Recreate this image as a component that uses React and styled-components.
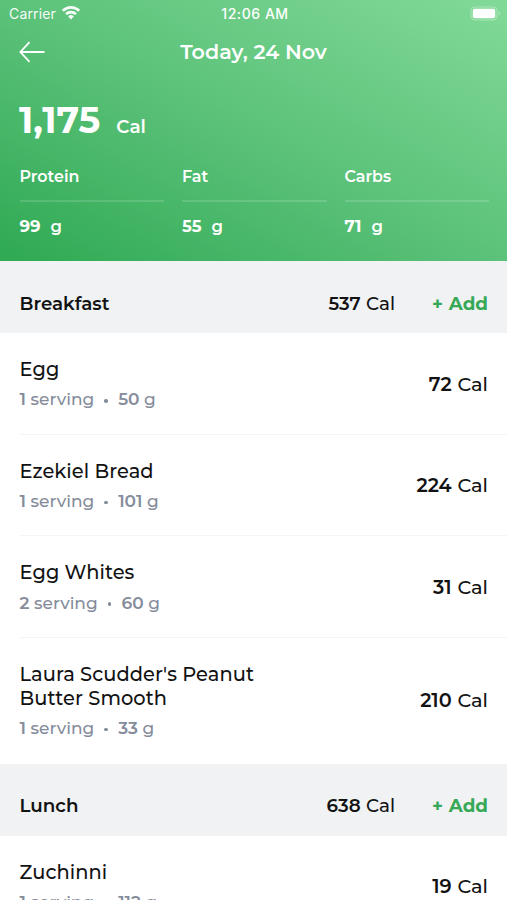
import React from 'react'
import styled, { createGlobalStyle } from 'styled-components'

const nutrients = [
    { label: 'Protein', value: 99 },
    { label: 'Fat', value: 55 },
    { label: 'Carbs', value: 71 },
];

const meals = [
    {
        name: 'Breakfast',
        cal: 537,
        foods: [
            { name: 'Egg', servings: 1, grams: 50, cal: 72 },
            { name: 'Ezekiel Bread', servings: 1, grams: 101, cal: 224 },
            { name: 'Egg Whites', servings: 2, grams: 60, cal: 31 },
            { name: "Laura Scudder's Peanut Butter Smooth", servings: 1, grams: 33, cal: 210 },
        ],
    },
    {
        name: 'Lunch',
        cal: 638,
        foods: [
            { name: 'Zuchinni', servings: 1, grams: 112, cal: 19 },
        ],
    },
];

const WifiIcon = () => (
    <svg width="20" height="15" viewBox="0 0 20 15" fill="none" stroke="#fff" strokeWidth="2.7">
        <path d="M1.8 5.7a11.6 11.6 0 0 1 16.4 0" />
        <path d="M5 9.1a7.1 7.1 0 0 1 10 0" />
        <path d="M10 14.4 7.1 11.5a4.1 4.1 0 0 1 5.8 0z" fill="#fff" stroke="none" />
    </svg>
);

const BatteryIcon = () => (
    <svg width="31" height="15" viewBox="0 0 31 15" fill="none">
        <rect x="1" y="1" width="26" height="13" rx="3.8" stroke="#fff" strokeOpacity="0.35" />
        <rect x="2.8" y="2.8" width="22.4" height="9.4" rx="1.8" fill="#fff" />
        <path d="M28.6 5.5c1.8.7 1.8 3.3 0 4z" fill="#fff" fillOpacity="0.4" />
    </svg>
);

const BackIcon = () => (
    <svg width="26" height="22" viewBox="0 0 26 22" fill="none" stroke="#fff" strokeWidth="1.8">
        <path d="M25.5 11H1.5M10.5 1.2 1.4 11l9.1 9.8" />
    </svg>
);

const App = () => {
    return (
        <Container>
            <GlobalStyle />
            <Header>
                <StatusBar>
                    <Carrier>
                        <span>Carrier</span>
                        <WifiIcon />
                    </Carrier>
                    <Time>12:06 AM</Time>
                    <Battery>
                        <BatteryIcon />
                    </Battery>
                </StatusBar>
                <NavBar>
                    <Back aria-label="Back">
                        <BackIcon />
                    </Back>
                    <Title>Today, 24 Nov</Title>
                </NavBar>
                <Total>
                    <strong>1,175</strong>
                    <span>Cal</span>
                </Total>
                <Nutrients>
                    {nutrients.map((n) => (
                        <Nutrient key={n.label}>
                            <NutrientLabel>{n.label}</NutrientLabel>
                            <NutrientValue>
                                <b>{n.value}</b>
                                <span>g</span>
                            </NutrientValue>
                        </Nutrient>
                    ))}
                </Nutrients>
            </Header>

            {meals.map((meal) => (
                <section key={meal.name}>
                    <MealHeader>
                        <MealName>{meal.name}</MealName>
                        <Calories $small><b>{meal.cal}</b> Cal</Calories>
                        <AddButton>+ Add</AddButton>
                    </MealHeader>
                    {meal.foods.map((food) => (
                        <Food key={food.name}>
                            <FoodInfo>
                                <FoodName>{food.name}</FoodName>
                                <Serving>
                                    <span><b>{food.servings}</b> serving</span>
                                    <Dot />
                                    <span><b>{food.grams}</b> g</span>
                                </Serving>
                            </FoodInfo>
                            <Calories><b>{food.cal}</b> Cal</Calories>
                        </Food>
                    ))}
                </section>
            ))}
        </Container>
    );
};

const GlobalStyle = createGlobalStyle`
* {
    box-sizing: border-box;
}

body {
    margin: 0;
    overflow: hidden;
    background: #fff;
}
`;

const Container = styled.div`
width: 507px;
height: 900px;
overflow: hidden;
background: #fff;
color: #121213;
font-family: Montserrat, Inter, sans-serif;
`;

const Header = styled.header`
height: 261px;
color: #fff;
background: linear-gradient(to top right, #2fa953 0%, #5cc27a 50%, #82da98 100%);
`;

const StatusBar = styled.div`
display: grid;
grid-template-columns: 1fr auto 1fr;
align-items: center;
height: 27px;
padding: 0 6px 0 9px;
font-family: Inter, sans-serif;
font-size: 14px;
`;

const Carrier = styled.div`
display: flex;
align-items: center;
gap: 5px;
letter-spacing: 0.15px;
opacity: 0.95;

svg{
    margin-top: -2px;
}
`;

const Time = styled.div`
font-weight: 500;
letter-spacing: 0.55px;
`;

const Battery = styled.div`
display: flex;
justify-content: flex-end;
`;

const NavBar = styled.nav`
display: grid;
grid-template-columns: 60px 1fr 60px;
align-items: center;
height: 50px;
`;

const Back = styled.button`
display: flex;
padding: 0 0 0 19px;
border: none;
background: none;
cursor: pointer;
`;

const Title = styled.h1`
margin: 0 0 1px;
text-align: center;
font-size: 20.7px;
font-weight: 600;
`;

const Total = styled.div`
display: flex;
align-items: baseline;
gap: 16px;
padding: 20px 19px 0;
line-height: 46px;

strong{
    font-size: 36.5px;
    font-weight: 700;
}

span{
    font-size: 18.4px;
    font-weight: 600;
}
`;

const Nutrients = styled.div`
display: grid;
grid-template-columns: repeat(3, 1fr);
gap: 18px;
padding: 16px 18px 0 19.5px;
`;

const Nutrient = styled.div`
line-height: 22px;
`;

const NutrientLabel = styled.div`
padding-bottom: 12px;
border-bottom: 2px solid rgba(255, 255, 255, 0.14);
font-size: 15.9px;
font-weight: 600;
`;

const NutrientValue = styled.div`
display: flex;
gap: 10px;
padding-top: 13px;
font-size: 16.5px;
font-weight: 600;

b{
    font-weight: 700;
}
`;

const MealHeader = styled.div`
display: flex;
align-items: center;
height: 72.2px;
padding: 12.3px 19px 0 19.5px;
background: #f0f2f4;
`;

const MealName = styled.h2`
flex: 1;
margin: 0;
font-size: 18.3px;
font-weight: 600;
`;

const Calories = styled.div`
font-size: ${(props) => (props.$small ? 18.3 : 19.3)}px;
font-weight: 500;
word-spacing: 0.6px;
white-space: nowrap;

b{
    font-weight: 600;
}
`;

const AddButton = styled.button`
margin: 0 0 0 37px;
padding: 0;
border: none;
background: none;
color: #36a856;
font-family: inherit;
font-size: 18.3px;
font-weight: 700;
word-spacing: 0.6px;
cursor: pointer;
`;

const Food = styled.div`
display: flex;
align-items: center;
justify-content: space-between;
margin-left: 19.5px;
padding: 24.1px 19px 22.4px 0;
border-bottom: 1px solid #f4f5f6;

&:last-child{
    border-bottom-color: transparent;
}

> ${Calories}{
    margin-top: -1.5px;
}
`;

const FoodInfo = styled.div`
width: 250px;
`;

const FoodName = styled.div`
font-size: 19.4px;
font-weight: 500;
line-height: 24px;
letter-spacing: 0.07px;
`;

const Serving = styled.div`
display: flex;
align-items: center;
margin-top: 7.1px;
color: #858c9b;
font-size: 17px;
font-weight: 500;
line-height: 23px;

b{
    font-weight: 600;
}
`;

const Dot = styled.i`
width: 3.5px;
height: 3.5px;
margin: 2px 10.2px 0;
border-radius: 50%;
background: #858c9b;
`;

export default App;
